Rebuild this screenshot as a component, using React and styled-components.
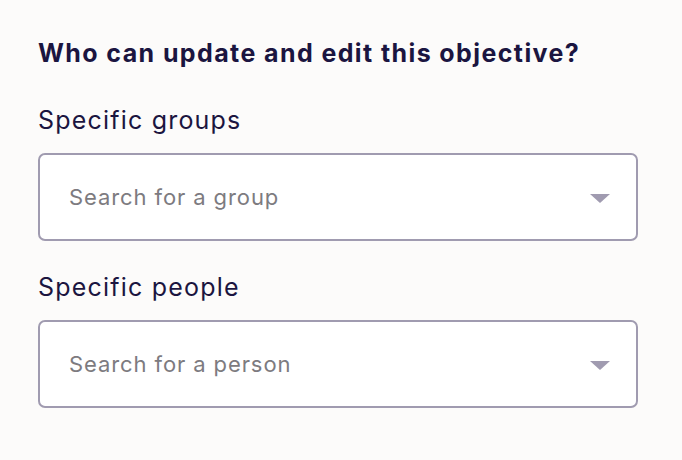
import * as React from 'react'
import styled, { createGlobalStyle } from 'styled-components'

const colors = {
  page: '#fcfbfa',
  ink: '#1b1540',
  border: '#a09bb0',
  placeholder: '#7d7b80',
}

const GlobalStyle = createGlobalStyle`
  html, body {
    margin: 0;
    padding: 0;
    background: ${colors.page};
  }
  body {
    font-family: Inter, "Open Sans", sans-serif;
    color: ${colors.ink};
  }
`

const Root = styled.div`
  width: 682px;
  height: 460px;
  box-sizing: border-box;
  padding: 37px 44px 0 38px;
  display: flex;
  flex-direction: column;
`

const Heading = styled.h2`
  margin: 0 0 35px;
  font-size: 25px;
  line-height: 32px;
  font-weight: 700;
  letter-spacing: 1.4px;
`

const Field = styled.div`
  display: flex;
  flex-direction: column;
  gap: 17px;
  margin-bottom: ${({ last }) => (last ? 0 : 30)}px;
`

const Label = styled.label`
  font-size: 25px;
  line-height: 32px;
  font-weight: 400;
  letter-spacing: 1.2px;
`

const Select = styled.div`
  height: 88px;
  box-sizing: border-box;
  border: 2px solid ${colors.border};
  border-radius: 7px;
  background: #fff;
  display: flex;
  align-items: center;
  justify-content: space-between;
  padding: 0 26px 0 29px;
`

const Placeholder = styled.span`
  font-size: 22px;
  letter-spacing: 0.9px;
  color: ${colors.placeholder};
`

const Caret = styled.span`
  width: 0;
  height: 0;
  border-left: 10px solid transparent;
  border-right: 10px solid transparent;
  border-top: 9px solid ${colors.border};
  margin-top: 3px;
`

const SelectField = ({ label, placeholder, last }) => (
  <Field last={last}>
    <Label>{label}</Label>
    <Select>
      <Placeholder>{placeholder}</Placeholder>
      <Caret />
    </Select>
  </Field>
)

const App = () => (
  <Root>
    <GlobalStyle />
    <Heading>Who can update and edit this objective?</Heading>
    <SelectField label='Specific groups' placeholder='Search for a group' />
    <SelectField label='Specific people' placeholder='Search for a person' last />
  </Root>
)

export default App
